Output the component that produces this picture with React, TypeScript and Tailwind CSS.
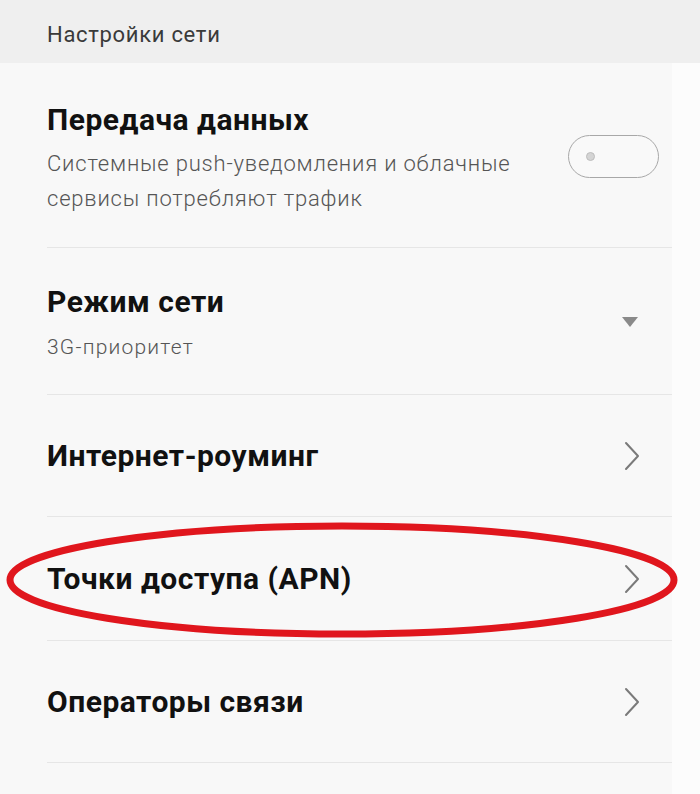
import React from 'react';

const font = { fontFamily: 'Roboto, "Noto Sans", sans-serif' };

function Chevron() {
  return (
    <svg width="16" height="30" viewBox="0 0 16 30" className="shrink-0">
      <path d="M2 2 L14 15 L2 28" fill="none" stroke="#7a7a7a" strokeWidth="2" strokeLinecap="round" strokeLinejoin="round" />
    </svg>
  );
}

function Caret() {
  return (
    <svg width="18" height="12" viewBox="0 0 18 12" className="shrink-0">
      <path d="M1 1 L17 1 L9 11 Z" fill="#8a8a8a" />
    </svg>
  );
}

function Toggle() {
  return (
    <div className="w-[91px] h-[43px] rounded-full border-[1.5px] border-[#a8a8a8] bg-[#f9f9f9] flex items-center pl-[17px] shrink-0">
      <div className="w-[9px] h-[9px] rounded-full bg-[#d4d4d4] border border-[#bdbdbd]" />
    </div>
  );
}

function LinkRow({ label, h }: { label: string; h: string }) {
  return (
    <div className={`flex items-center justify-between pr-[32px] border-b border-[#e6e6e6] ${h}`}>
      <span className="text-[30px] leading-[36px] font-bold text-[#111] tracking-[0.5px]">{label}</span>
      <Chevron />
    </div>
  );
}

export default function App() {
  return (
    <div className="w-[700px] h-[794px] bg-[#fcfcfc] overflow-hidden relative" style={font}>
      <div className="h-[63px] bg-[#efefef] flex items-center pl-[47px] pt-[6px]">
        <span className="text-[22px] text-[#3a3a3a] tracking-[0.7px]">Настройки сети</span>
      </div>

      <div className="w-[672px] bg-[#f8f8f8] pl-[47px]">
        {/* Передача данных */}
        <div className="h-[185px] flex items-start justify-between pr-[13px] pt-[39px] border-b border-[#e6e6e6]">
          <div>
            <div className="text-[30px] leading-[36px] font-bold text-[#111] tracking-[0.5px]">Передача данных</div>
            <div className="mt-[8px] text-[22px] leading-[35px] text-[#555] font-light tracking-[0.8px] w-[500px]">
              Системные push-уведомления и облачные сервисы потребляют трафик
            </div>
          </div>
          <div className="mt-[33px]">
            <Toggle />
          </div>
        </div>

        {/* Режим сети */}
        <div className="h-[147px] flex items-start justify-between pr-[33px] pt-[36px] border-b border-[#e6e6e6]">
          <div>
            <div className="text-[30px] leading-[36px] font-bold text-[#111] tracking-[0.5px]">Режим сети</div>
            <div className="mt-[12px] text-[21px] leading-[30px] text-[#555] font-light tracking-[1.2px]">3G-приоритет</div>
          </div>
          <div className="mt-[32px]">
            <Caret />
          </div>
        </div>

        <LinkRow label="Интернет-роуминг" h="h-[122px]" />
        <LinkRow label="Точки доступа (APN)" h="h-[124px]" />
        <LinkRow label="Операторы связи" h="h-[122px]" />
        <div className="h-[40px]" />
      </div>

      {/* red highlight around APN row */}
      <svg className="absolute left-0 top-0 pointer-events-none" width="700" height="794" viewBox="0 0 700 794">
        <ellipse cx="342" cy="580" rx="332" ry="54" fill="none" stroke="#e0161d" strokeWidth="7" />
      </svg>
    </div>
  );
}
